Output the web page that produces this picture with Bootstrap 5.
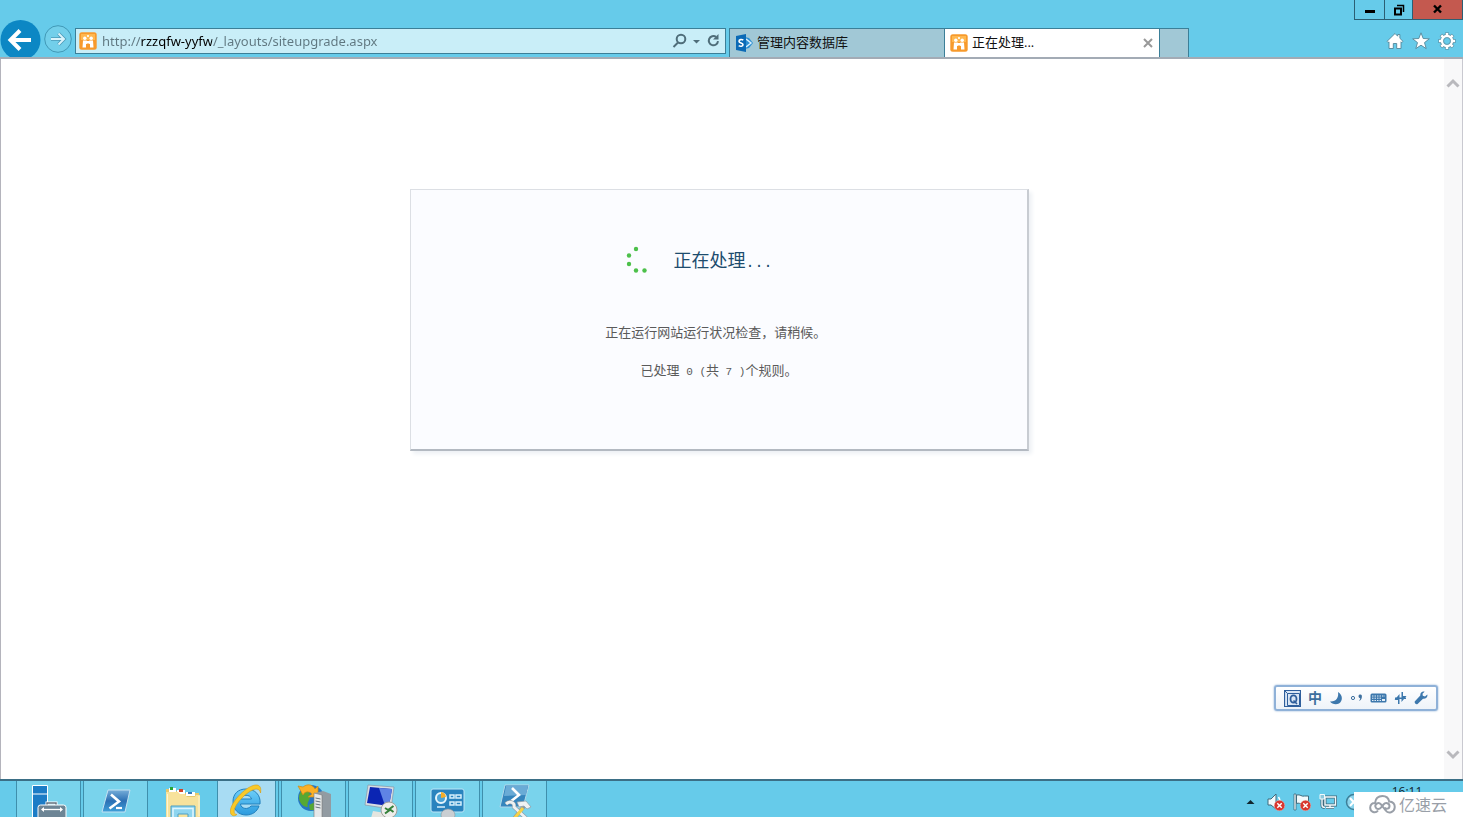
<!DOCTYPE html>
<html lang="zh-CN">
<head>
<meta charset="utf-8">
<meta name="viewport" content="width=device-width, initial-scale=1">
<title>正在处理...</title>
<link href="https://cdn.jsdelivr.net/npm/bootstrap@5.3.0/dist/css/bootstrap.min.css" rel="stylesheet">
<style>
:root { --sky: #66cbea; --edge: #3b7f98; }
body { font-family: "Open Sans", "Noto Sans CJK SC", sans-serif; font-size: 13px; background: #fff; }
button { background: none; border: 0; padding: 0; color: inherit; }
svg { display: block; flex: none; }

/* browser frame */
.frame-top { background: var(--sky); border-bottom: 2px solid #a3abb5; }
.caption-row { height: 20px; }
.caption-btn { height: 20px; width: 30px; border: 1px solid #2b5f74; border-top: 0; border-right: 0; }
.caption-narrow { width: 28px; }
.caption-close { width: 51px; background: #c4594f; border-right: 1px solid #2b5f74; }
.nav-row { height: 37px; }
.back-btn { width: 41px; height: 37px; overflow: hidden; }
.forward-btn { margin: 0 3px; }
.address { flex: 0 0 44.5%; height: 26px; background: #c9eef8; border: 1px solid var(--edge); padding: 0 4px 0 3px; gap: 5px; margin-right: 3px; }
.address input {
  min-width: 0; height: 24px; border: 0; outline: 0; padding: 0; font-family: "Noto Sans", sans-serif; font-size: 13px; color: #5f7780;
  background: linear-gradient(90deg, #5f7780 39px, #000 39px, #000 110px, #5f7780 110px);
  -webkit-background-clip: text; background-clip: text; -webkit-text-fill-color: transparent;
}
.tab-item { width: 215px; height: 29px; background: #a1c8d6; border: 1px solid var(--edge); border-bottom: 0; border-right: 0; padding: 0 5px; gap: 4px; }
.tab-item.current { background: #fff; }
.tab-item a { color: #111; text-decoration: none; }
.tab-new { width: 30px; height: 29px; background: #a1c8d6; border: 1px solid var(--edge); border-bottom: 0; }
.tools { gap: 8px; padding: 0 7px 0 0; }

/* page area */
.viewport { border-left: 1px solid #b4b4bc; border-right: 1px solid #c9c9d0; min-height: 0; }
.page { padding: 130px 6px 0 0; }
.scroll-rail { width: 18px; background: #f8f8f9; padding: 18px 0; }
.dialog-panel { width: 619px; height: 262px; background: #fbfcff; border: 1px solid #dcdfe4; border-right: 2px solid #c8ccd2; border-bottom: 2px solid #b3b9c1; box-shadow: 3px 3px 4px #eef1f5; color: #5a5a5a; }
.dialog-head { padding: 54px 40px 0 0; gap: 24px; }
.dialog-head h1 { font-size: 18px; line-height: 32px; font-weight: 400; color: #1d4c6e; margin: 0; }
.dialog-panel p { line-height: 20px; margin: 0; }
.dialog-panel p + p { margin-top: 18px; }
.dialog-text { padding-top: 46px; }
.half { font-family: "Liberation Mono", monospace; font-size: 11px; line-height: 1; white-space: pre; }
.dialog-head .half { font-size: 15px; }

/* input method bar */
.ime { right: 25px; bottom: 106px; height: 26px; width: 164px; border: 2px solid #8fb1d8; border-radius: 3px; background: linear-gradient(#fff, #eef3f9); box-shadow: 0 0 2px #7fa5d0; padding: 0 8px; color: #3d6f9e; }
.ime-mode { font-size: 14px; line-height: 20px; font-weight: 700; }

/* taskbar */
.taskbar { height: 38px; background: var(--sky); border-top: 2px solid #3b6f86; }
.taskbar-apps { padding-left: 16px; gap: 2px; }
.app-btn { width: 65px; height: 36px; overflow: hidden; background: #79d3ec; border: 1px solid #3f8fac; border-width: 0 1px; }
.app-plain { background: none; border-color: transparent; }
.app-active { width: 59px; background: #a8dcf3; }
.app-stack { width: 1px; height: 36px; background: #3f8fac; }
.tray { gap: 8px; padding-right: 36px; }
.clock { font-size: 12px; line-height: 14px; color: #10262e; width: 40px; text-align: center; padding-top: 4px; }
.brand { right: 0; bottom: 0; width: 109px; height: 25px; background: #fff; color: #999fa8; gap: 3px; padding-right: 16px; font-size: 16px; line-height: 20px; }
</style>
</head>
<body class="vh-100 overflow-hidden d-flex flex-column position-relative">
<svg width="0" height="0" class="position-absolute" aria-hidden="true">
  <defs>
    <symbol id="site" viewBox="0 0 18 18">
      <rect x=".3" y=".3" width="17.400" height="17.400" rx="2.500" fill="#f79a2c"/>
      <path d="M2 2h14v6H2z" fill="#ffb850"/>
      <g fill="#fff"><circle cx="5.800" cy="6.300" r="1.700"/><circle cx="12.200" cy="6.300" r="1.700"/><path d="M4 8.500h3.800V12H7v3.500H3.500zM10.200 8.500H14l.5 7H11V12h-.8zM7.500 9h3v2.500h-3z"/><path d="M8.200 3h1.600v2H8.200z"/></g>
    </symbol>
    <symbol id="alert" viewBox="0 0 10 10"><circle cx="5" cy="5" r="4.800" fill="#d8362f" stroke="#f6c5c0" stroke-width=".4"/><path d="M3 3l4 4M7 3L3 7" stroke="#fff" stroke-width="1.300"/></symbol>
  </defs>
</svg>

<header class="frame-top flex-shrink-0">
  <div class="caption-row d-flex justify-content-end">
    <button class="caption-btn d-flex justify-content-center align-items-center" aria-label="最小化"><svg width="12" height="12"><path d="M1 6h10v3H1z" fill="#000"/></svg></button>
    <button class="caption-btn caption-narrow d-flex justify-content-center align-items-center" aria-label="还原"><svg width="12" height="12" fill="none" stroke="#000"><path d="M2 4.500h6v6H2z" stroke-width="2"/><path d="M4 1.500h6.500V8" stroke-width="1.500"/></svg></button>
    <button class="caption-btn caption-close d-flex justify-content-center align-items-center" aria-label="关闭"><svg width="12" height="12"><path d="M2 1.500L9 8.500M9 1.500L2 8.500" stroke="#000" stroke-width="2.400"/></svg></button>
  </div>
  <div class="nav-row d-flex align-items-center">
    <button class="back-btn flex-shrink-0" aria-label="后退"><svg width="41" height="41"><circle cx="20.500" cy="20" r="20" fill="#0c87c4"/><path d="M31 20H11M20 10.500L10.500 20l9.500 9.500" fill="none" stroke="#fff" stroke-width="4"/></svg></button>
    <button class="forward-btn flex-shrink-0" aria-label="前进"><svg width="28" height="28"><circle cx="14" cy="14" r="13.300" fill="#72cfea" stroke="#4198b6"/><path d="M7 14h13M14.500 8.500L20 14l-5.500 5.500" fill="none" stroke="#4b9bb8" stroke-width="3.600"/><path d="M7 14h12.500M14.500 8.500L20 14l-5.500 5.500" fill="none" stroke="#d9f3fb" stroke-width="2"/></svg></button>
    <div class="address d-flex align-items-center mt-1">
      <svg width="18" height="18"><use href="#site"/></svg>
      <input class="flex-grow-1" type="text" aria-label="地址" value="http://rzzqfw-yyfw/_layouts/siteupgrade.aspx">
      <button aria-label="搜索"><svg width="15" height="16" fill="none" stroke="#4f6e7a" stroke-width="2"><circle cx="9" cy="6" r="4.300"/><path d="M6 9.500L1.500 14"/></svg></button>
      <button aria-label="显示地址"><svg width="9" height="8"><path d="M1 3h7L4.500 6.500z" fill="#4f6e7a"/></svg></button>
      <button aria-label="刷新"><svg width="15" height="15"><path d="M12 8.200a4.600 4.600 0 1 1-2-4.300" fill="none" stroke="#4f6e7a" stroke-width="2"/><path d="M12.500 1v5.500H7z" fill="#4f6e7a"/></svg></button>
    </div>
    <nav class="d-flex align-self-end" aria-label="标签页">
      <div class="tab-item d-flex align-items-center">
        <svg width="18" height="18"><path d="M10 3l4 1 4 5-4 5-4 1z" fill="#2b8fd3"/><path d="M11 5l5 4-5 4" fill="none" stroke="#d9f0ff" stroke-width="1.500"/><path d="M1 2l10-2v18L1 16z" fill="#0a6ab6"/><path d="M8.300 6.200C7 5.200 4 5.300 4 7.200c0 2 4 1.500 4 3.500 0 1.800-2.800 1.900-4.300.9" fill="none" stroke="#fff" stroke-width="1.600"/></svg>
        <a href="#">管理内容数据库</a>
      </div>
      <div class="tab-item current d-flex align-items-center">
        <svg width="18" height="18"><use href="#site"/></svg>
        <a href="#" aria-current="page">正在处理...</a>
        <button class="ms-auto" aria-label="关闭标签页"><svg width="12" height="12"><path d="M2 2l8 8M10 2l-8 8" stroke="#999" stroke-width="2"/></svg></button>
      </div>
      <button class="tab-new" aria-label="新建标签页"></button>
    </nav>
    <div class="tools d-flex ms-auto mt-1">
      <button aria-label="主页"><svg width="18" height="18"><path d="M9 1.500l2.700 2.700V2.500h2.200v3.800L17 9.400l-1.200 1.200-.8-.8v6.700h-4.300v-5H7.300v5H3V9.800l-.8.8L1 9.400z" fill="#fff" stroke="#54879a" stroke-width=".9"/></svg></button>
      <button aria-label="收藏夹"><svg width="18" height="18"><path d="M9 .8l2.200 5.700 6.100.3-4.800 3.800 1.700 6L9 13.200l-5.200 3.400 1.700-6L.7 6.800l6.100-.3z" fill="#fff" stroke="#54879a" stroke-width=".9"/></svg></button>
      <button aria-label="工具"><svg width="18" height="18" fill="none"><g stroke="#54879a"><circle cx="9" cy="9" r="5" stroke-width="3.800"/><path d="M9 .5v17M.5 9h17M3 3l12 12M15 3L3 15" stroke-width="3.800"/></g><path d="M9 1v16M1 9h16M3.300 3.300l11.400 11.400M14.700 3.300L3.300 14.700" stroke="#fff" stroke-width="2.600"/><circle cx="9" cy="9" r="5" stroke="#fff" stroke-width="2.400"/><circle cx="9" cy="9" r="3.500" fill="#66cbea" stroke="#54879a" stroke-width=".8"/></svg></button>
    </div>
  </div>
</header>

<div class="viewport d-flex flex-grow-1">
  <main class="page flex-grow-1">
    <section class="dialog-panel mx-auto">
      <div class="dialog-head d-flex justify-content-center align-items-center">
        <svg width="24" height="28" fill="#4cc04a"><circle cx="11" cy="3" r="2.200"/><circle cx="4" cy="9.500" r="2.200"/><circle cx="4" cy="18" r="2.200"/><circle cx="11" cy="24.500" r="2.200"/><circle cx="19.500" cy="24.500" r="2.200"/></svg>
        <h1>正在处理<span class="half">...</span></h1>
      </div>
      <div class="dialog-text text-center">
        <p>正在运行网站运行状况检查，请稍候。<span class="half">&nbsp;</span></p>
        <p>已处理<span class="half"> 0 (</span>共<span class="half"> 7 )</span>个规则。</p>
      </div>
    </section>
  </main>
  <div class="scroll-rail d-flex flex-column justify-content-between align-items-center">
    <button aria-label="向上滚动"><svg width="14" height="12"><path d="M1.500 9.500L7 4l5.500 5.500" fill="none" stroke="#b9b9bd" stroke-width="3"/></svg></button>
    <button aria-label="向下滚动"><svg width="14" height="12"><path d="M1.500 2.500L7 8l5.500-5.500" fill="none" stroke="#b9b9bd" stroke-width="3"/></svg></button>
  </div>
</div>

<div class="ime position-absolute d-flex align-items-center justify-content-between">
  <button aria-label="输入法"><svg width="17" height="17" fill="none" stroke="#2f5f9c"><path d="M.5.500h16v16H.5z" fill="#dbe7f5" stroke-width="1.200"/><path d="M3.500 3.500h12v12h-12zM.5.500l3 3"/><ellipse cx="9.500" cy="9" rx="3" ry="3.700" stroke-width="1.800"/><path d="M9.500 10.500l3.500 3.500" stroke-width="1.600"/></svg></button>
  <button class="ime-mode">中</button>
  <button aria-label="半角"><svg width="14" height="14"><path d="M9 1c5 3 5 9 1 11.500-3 1.500-7 .8-9-2C7 11 10 6.500 9 1z" fill="#3d78ad"/></svg></button>
  <button aria-label="中文标点"><svg width="13" height="12"><circle cx="3" cy="6" r="1.600" fill="none" stroke="#3d6f9e"/><path d="M8.500 4a1.700 1.700 0 0 1 3.400.5C11.900 7 10.500 8.500 9 9c.7-1 1.200-1.700 1.200-2.700C9.200 6.300 8.500 5 8.500 4z" fill="#3d6f9e"/></svg></button>
  <button aria-label="软键盘"><svg width="17" height="12"><rect x=".5" y="1.500" width="16" height="9" rx="1.500" fill="#3d78ad"/><path d="M2 4h13M2 6.200h9M2 8.500h9" stroke="#e3eef8" stroke-dasharray="1.500 1"/><path d="M12 7h3v2h-3z" fill="#e3eef8"/></svg></button>
  <button aria-label="切换"><svg width="13" height="14" fill="#3d78ad"><path d="M4 13V9H.5L5.500 3v10zM7.500 1H9v4h3.500l-5 6z"/><path d="M1 6.500h11v1.500H1z"/></svg></button>
  <button aria-label="设置"><svg width="14" height="14"><path d="M13.300 3.500L11 5.500 8.800 4.800 8.500 2.800 10.600.8C8.500 0 6 1.600 6.300 4.500L.9 10.200c-1 1.500 1 3.700 2.700 2.700L9 7.700c3 .4 5-1.700 4.300-4.200z" fill="#3d78ad"/></svg></button>
</div>

<footer class="taskbar flex-shrink-0 d-flex justify-content-between overflow-hidden">
  <div class="taskbar-apps d-flex">
    <button class="app-btn d-flex justify-content-center" aria-label="服务器管理器"><svg width="36" height="40"><path d="M1.500 4.500h15v34h-15z" fill="#1c7cc6" stroke="#fff"/><path d="M1.500 13h15" stroke="#fff"/><path d="M16 25v-3h9v3" fill="none" stroke="#fff" stroke-width="3"/><path d="M16 25v-3h9v3" fill="none" stroke="#62707e" stroke-width="1.500"/><rect x="7" y="24" width="28" height="18" rx="2.500" fill="#6d8595" stroke="#fff"/><path d="M11 28.500h20" stroke="#fff" stroke-width="1.300"/><path d="M10 28.500l3-2.500v5zM32 28.500L29 26v5z" fill="#fff"/></svg></button>
    <button class="app-btn d-flex justify-content-center" aria-label="PowerShell"><svg width="32" height="36"><defs><linearGradient id="ps" x2="0" y2="1"><stop stop-color="#77aed9"/><stop offset=".5" stop-color="#2c70b4"/><stop offset="1" stop-color="#3ea0da"/></linearGradient></defs><path d="M8 9h22l-5 22H2z" fill="url(#ps)" stroke="#c4e2f2"/><path d="M11 13.500l8 7-9.500 7" fill="none" stroke="#fff" stroke-width="2.600"/><path d="M16 27h6" stroke="#fff" stroke-width="2.200"/></svg></button>
    <button class="app-btn app-plain d-flex justify-content-center" aria-label="文件资源管理器"><svg width="36" height="40"><path d="M1 38V8h9l1 2h7l1 2h15v26z" fill="#e6c76c"/><path d="M4 7h7v4H4zM12 9h8v4h-8zM21 11h9v4h-9z" fill="#fff"/><path d="M5 6h3v3H5z" fill="#28a436"/><path d="M14 8h4v3h-4z" fill="#d34328"/><path d="M23 11h4v2h-4z" fill="#3178bd"/><path d="M1 11h12l2 2h5l2 3h8l1-2h4v24H1z" fill="#f7e29c"/><path d="M2.500 13v24M34 15v20" stroke="#fff5cf"/><path d="M6 40V25h24v15h-7v-7H13v7z" fill="#8ed5ef" stroke="#4d9fc4"/><path d="M8 40V27.500h20V40" fill="none" stroke="#dff6ff" stroke-width="1.500"/></svg></button>
    <button class="app-btn app-active d-flex justify-content-center" aria-label="Internet Explorer"><svg width="34" height="40"><defs><linearGradient id="ie" x2="0" y2="1"><stop stop-color="#6fd0fa"/><stop offset="1" stop-color="#2a9ade"/></linearGradient></defs><path d="M16 8C8 8 3 13 3 20.500S8 34 16 34c6 0 11-3 13-9h-8c-3 4-10 3-10.500-2H30C31 14 25 8 16 8zm-5.500 10c1-5 10-5 11 0z" fill="url(#ie)" stroke="#2381bd"/><path d="M30.500 12c2-11-7-9-14-4C5 16-4 31 2.500 34.500c1.500.6 3 .2 4.500-1C1.500 33 4.500 25 11 18 19 9.500 29 4 30.500 12z" fill="#f8c928" stroke="#d69b10" stroke-width=".6"/></svg></button>
    <span class="app-stack"></span>
    <button class="app-btn d-flex justify-content-center" aria-label="IIS 管理器"><svg width="34" height="40"><circle cx="14" cy="17" r="13" fill="#2676c3"/><path d="M3 12c4-5 9-3 10 2s-4 7-2 12c-7 0-11-8-8-14zM12 24l6-3v8h-5z" fill="#55a833"/><path d="M1 5l5 1c5-4 10-2 12 2l3-3v11H11l4-3c-3-3-7-3-9 1z" fill="#fbb026" stroke="#cf8b12" stroke-width=".7"/><path d="M18 12l8-2 8 3v27H18z" fill="#929ba2"/><path d="M17 12l8 2v26h-8z" fill="#e5e8e9" stroke="#777" stroke-width=".6"/><path d="M18.500 17l5 1M18.500 20l5 1M18.500 23l5 1M18.500 26l5 1" stroke="#69747c"/></svg></button>
    <button class="app-btn d-flex justify-content-center" aria-label="远程桌面"><svg width="34" height="40"><path d="M9 30l12 2 2 5H7z" fill="#e4e5df"/><path d="M4 4l26 2-3 22L1 24z" fill="#d8dde2" stroke="#8496a8" stroke-width=".7"/><path d="M6 6l22 2-3 17L3 22z" fill="#0b25b3"/><path d="M15 7l13 1-3 17-4-.5z" fill="#5f83e5"/><circle cx="25" cy="29" r="8" fill="#ededeb" stroke="#a0a09b"/><path d="M21 27l4 2.500-4 3M29.500 25l-4 3 4 3" fill="none" stroke="#348139" stroke-width="2"/></svg></button>
    <button class="app-btn d-flex justify-content-center" aria-label="控制面板"><svg width="36" height="40"><rect x="1" y="8" width="33" height="23" rx="2" fill="#2983be" stroke="#bce5f7"/><circle cx="11" cy="17" r="5" fill="#4ba3d5" stroke="#e5f5fc" stroke-width="2"/><path d="M11 17v-6a6 6 0 0 1 5 5z" fill="#f4ad29"/><g fill="none" stroke="#d6f0fc" stroke-width="1.500"><path d="M20 14h4v3h-4zM26 14h5v3h-5zM20 21h4v3h-4zM26 21h5v3h-5zM7 26h8"/></g><ellipse cx="18" cy="34" rx="7" ry="6" fill="#c9ced2" stroke="#8c979e" stroke-width=".6"/></svg></button>
    <button class="app-btn d-flex justify-content-center" aria-label="管理外壳"><svg width="34" height="40"><path d="M7 4h24l-6 22H2z" fill="#3585bd" stroke="#b2d8ea"/><path d="M8 5h22l-2 9L6 15z" fill="#6aabd6"/><path d="M14 7l7 7-9 7" fill="none" stroke="#fff" stroke-width="2.600"/><path d="M8 23c4-4 9-1 8 3l15 14M27 24L15 39" stroke="#8c9ba4" stroke-width="4" fill="none"/><path d="M8 23c4-4 9-1 8 3l15 14" stroke="#eef1f2" stroke-width="2.800" fill="none"/><path d="M25 27L15 39" stroke="#f5d247" stroke-width="3"/><path d="M19 21l9-1 5 6-4 2-3-3-5 1z" fill="#eff2f3" stroke="#8c9ba4" stroke-width=".7"/></svg></button>
  </div>
  <div class="tray d-flex align-items-start">
    <button class="pt-3" aria-label="显示隐藏的图标"><svg width="9" height="9"><path d="M.5 7h8l-4-4z" fill="#10262e"/></svg></button>
    <button class="pt-2 mt-1 ms-1" aria-label="音量"><svg width="18" height="18"><path d="M1 6h3l5-5v15l-5-4H1z" fill="#f2fafc" stroke="#3e6a7c"/><path d="M11.500 4c1.500 2 1.500 3 1.500 5" fill="none" stroke="#fff" stroke-width="1.500"/><use href="#alert" x="7" y="7" width="11" height="11"/></svg></button>
    <button class="pt-2 mt-1" aria-label="操作中心"><svg width="18" height="18"><path d="M1 1h2v16H1z" fill="#fff" stroke="#3e6a7c" stroke-width=".8"/><path d="M3.500 2c4-1 5 2 8 1h4v8H10c-3 0-4-1.500-6.500-.5z" fill="#f2fafc" stroke="#3e6a7c"/><use href="#alert" x="7" y="7" width="11" height="11"/></svg></button>
    <button class="pt-2 mt-1" aria-label="网络"><svg width="18" height="18" fill="none"><path d="M6 4h10.500v8H6zM11 12v3M7 14.500h8M3 5v7c0 2 1 2.500 3 2.500" stroke="#3e6a7c" stroke-width="3"/><path d="M6 4h10.500v8H6zM11 12v3M7 14.500h8M3 5v7c0 2 1 2.500 3 2.500" stroke="#f2fafc" stroke-width="1.400"/><path d="M1 1.500h4.500V6H1z" fill="#8cc8dc" stroke="#f2fafc"/></svg></button>
    <button class="pt-2 mt-1" aria-label="输入指示"><svg width="18" height="18"><circle cx="9" cy="9" r="7.500" fill="#8bd4ec" stroke="#3e7f98" stroke-width="1.500"/><path d="M5 5l7 8M12 5l-7 8" stroke="#fff" stroke-width="2"/></svg></button>
    <time class="clock ms-3">16:11</time>
  </div>
</footer>
<div class="brand position-absolute d-flex align-items-center justify-content-end">
  <svg width="27" height="19" viewBox="0 0 27 19" fill="none" stroke="#999fa8" stroke-width="2"><path d="M9 15.500C6.500 19 1 17 1.200 12.500 1.300 9.500 3.500 7.800 6 8 6.500 3.500 9.500 1 13.500 1c3.500 0 6 2 6.700 5.500C24 6.700 26 9 25.700 12.500c-.3 5-6.500 6.500-9 3L12 9.500c-2.500-3-6.500-.5-5.500 2.500.8 2.500 4 2.500 5.500.5l2.500-3c2-2.500 6-1.500 6 1.500s-3.500 3.500-5 1.500"/></svg>
  <span>亿速云</span>
</div>
<script src="https://cdn.jsdelivr.net/npm/bootstrap@5.3.0/dist/js/bootstrap.bundle.min.js"></script>
</body>
</html>
